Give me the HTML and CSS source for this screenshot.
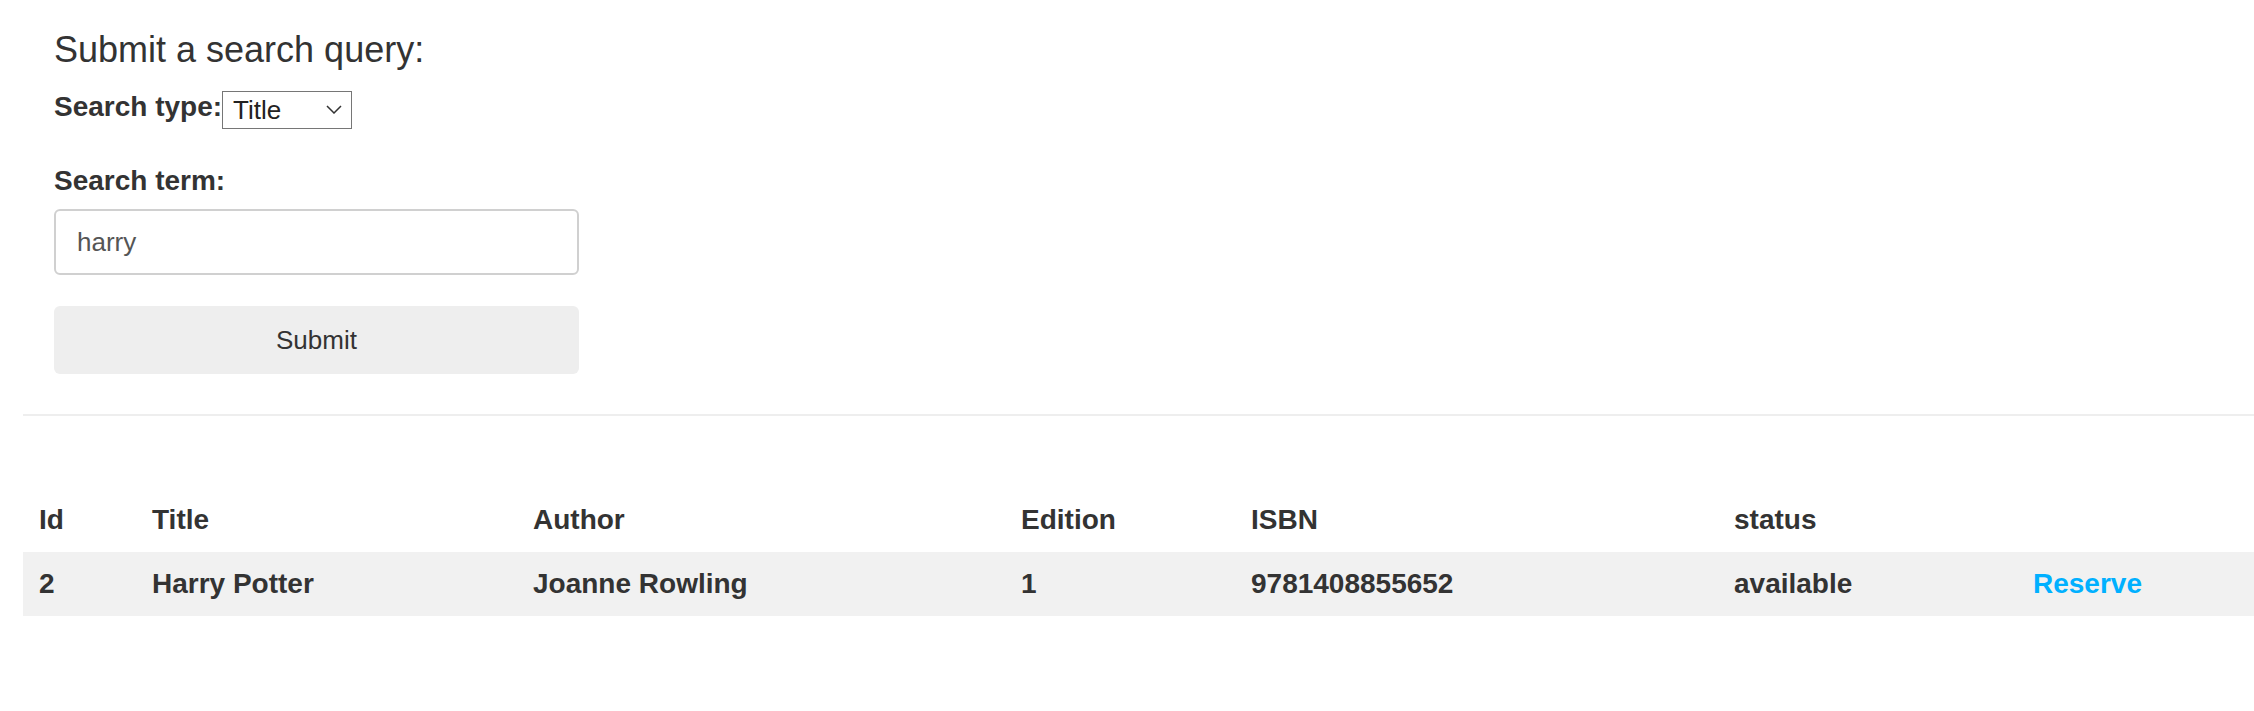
FILE: index.html
```html
<!DOCTYPE html>
<html lang="en">
<head>
<meta charset="utf-8">
<title>Search</title>
<link rel="stylesheet" href="styles.css">
</head>
<body>
<main class="page">
  <section class="search">
    <h3 class="search-title">Submit a search query:</h3>
    <form class="search-form">
      <div class="type-row">
        <label class="label" for="type">Search type:</label>
        <div class="select-wrap">
          <select id="type" class="select">
            <option>Title</option>
            <option>Author</option>
            <option>ISBN</option>
          </select>
          <svg class="chevron" width="16" height="9" viewBox="0 0 16 9" aria-hidden="true"><path d="M1 1 L8 8 L15 1" fill="none" stroke="#333" stroke-width="1.5"/></svg>
        </div>
      </div>
      <label class="label term-label" for="term">Search term:</label>
      <input id="term" class="input" type="text" value="harry">
      <button class="submit" type="button">Submit</button>
    </form>
  </section>
  <hr class="divider">
  <table class="results">
    <thead>
      <tr>
        <th class="c-id">Id</th>
        <th class="c-title">Title</th>
        <th class="c-author">Author</th>
        <th class="c-edition">Edition</th>
        <th class="c-isbn">ISBN</th>
        <th class="c-status">status</th>
        <th class="c-action"></th>
      </tr>
    </thead>
    <tbody>
      <tr class="row">
        <td>2</td>
        <td>Harry Potter</td>
        <td>Joanne Rowling</td>
        <td>1</td>
        <td>9781408855652</td>
        <td>available</td>
        <td><a class="reserve" href="#">Reserve</a></td>
      </tr>
    </tbody>
  </table>
</main>
</body>
</html>
```
FILE: styles.css
```css
html, body {
  margin: 0;
  padding: 0;
  background: #fff;
}
body {
  font-family: "Liberation Sans", Arial, Helvetica, sans-serif;
  color: #333;
}
.page {
  padding-left: 23px;
}
.search {
  padding: 30px 0 0 31px;
}
.search-title {
  margin: 0;
  font-size: 36px;
  line-height: 40px;
  font-weight: normal;
  color: #333;
}
.search-form {
  width: 525px;
  display: flex;
  flex-direction: column;
}
.type-row {
  margin-top: 21px;
  display: flex;
  align-items: flex-start;
}
.label {
  font-size: 28px;
  line-height: 32px;
  font-weight: bold;
  color: #333;
}
.select-wrap {
  position: relative;
  width: 130px;
  height: 38px;
}
.select {
  appearance: none;
  -webkit-appearance: none;
  box-sizing: border-box;
  width: 130px;
  height: 38px;
  margin: 0;
  padding: 0 0 0 10px;
  border: 1px solid #767676;
  border-radius: 0;
  background: #fff;
  font-family: "Liberation Sans", Arial, sans-serif;
  font-size: 26px;
  color: #222;
}
.chevron {
  position: absolute;
  right: 10px;
  top: 14px;
  pointer-events: none;
}
.term-label {
  margin-top: 36px;
}
.input {
  box-sizing: border-box;
  margin-top: 12px;
  width: 525px;
  height: 66px;
  padding: 0 21px;
  border: 2px solid #d0d0d0;
  border-radius: 6px;
  font-family: "Liberation Sans", Arial, sans-serif;
  font-size: 26px;
  color: #555;
  outline: none;
}
.submit {
  box-sizing: border-box;
  margin-top: 31px;
  width: 525px;
  height: 68px;
  border: none;
  border-radius: 6px;
  background: #eee;
  font-family: "Liberation Sans", Arial, sans-serif;
  font-size: 26px;
  color: #333;
}
.divider {
  margin: 40px 0 0 0;
  border: none;
  height: 2px;
  background: #eee;
}
.results {
  margin-top: 72px;
  width: 100%;
  border-collapse: collapse;
  table-layout: fixed;
  font-size: 28px;
  font-weight: bold;
  color: #333;
}
.results th,
.results td {
  height: 64px;
  padding: 0 16px;
  text-align: left;
  vertical-align: middle;
  box-sizing: border-box;
}
.row {
  background: #f1f1f1;
}
.c-id { width: 113px; }
.c-title { width: 381px; }
.c-author { width: 488px; }
.c-edition { width: 230px; }
.c-isbn { width: 483px; }
.c-status { width: 299px; }
.c-action { width: 237px; }
.reserve {
  color: #00b0ff;
  text-decoration: none;
}
```
